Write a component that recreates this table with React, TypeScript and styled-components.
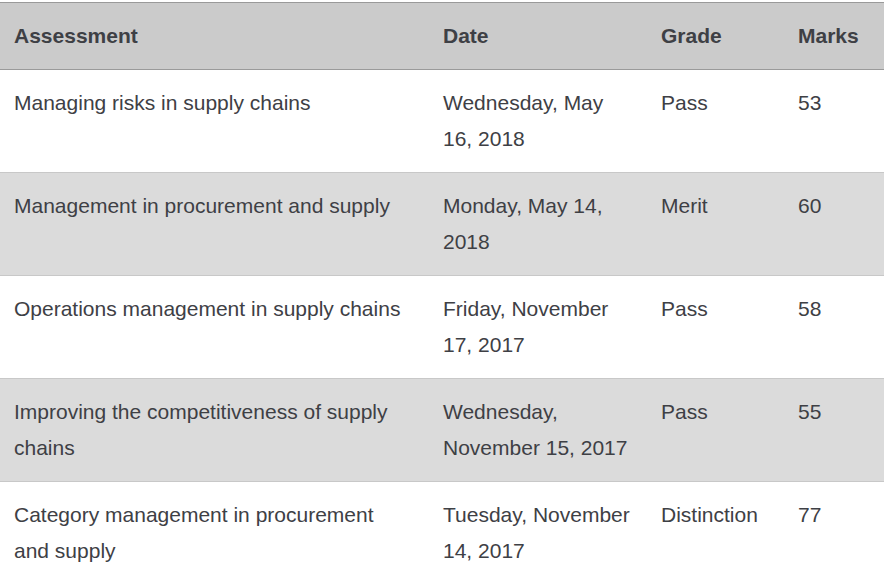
import styled, {createGlobalStyle} from 'styled-components';

const GlobalStyle = createGlobalStyle`
  html, body {
    margin: 0;
    padding: 0;
    background: #fff;
  }
  body {
    font-family: "Liberation Sans", Arial, sans-serif;
    color: #3e4045;
    overflow: hidden;
  }
`;

interface IAssessment {
    title: string;
    date: string;
    grade: string;
    marks: number;
}

const rows: IAssessment[] = [
    {title: 'Managing risks in supply chains', date: 'Wednesday, May 16, 2018', grade: 'Pass', marks: 53},
    {title: 'Management in procurement and supply', date: 'Monday, May 14, 2018', grade: 'Merit', marks: 60},
    {title: 'Operations management in supply chains', date: 'Friday, November 17, 2017', grade: 'Pass', marks: 58},
    {title: 'Improving the competitiveness of supply chains', date: 'Wednesday, November 15, 2017', grade: 'Pass', marks: 55},
    {title: 'Category management in procurement and supply', date: 'Tuesday, November 14, 2017', grade: 'Distinction', marks: 77},
];

const App = () => {
    return <Page>
        <GlobalStyle/>
        <Table>
            <colgroup>
                <col style={{width: 429}}/>
                <col style={{width: 218}}/>
                <col style={{width: 137}}/>
                <col style={{width: 100}}/>
            </colgroup>
            <thead>
                <tr>
                    <HeadCell>Assessment</HeadCell>
                    <HeadCell>Date</HeadCell>
                    <HeadCell>Grade</HeadCell>
                    <HeadCell>Marks</HeadCell>
                </tr>
            </thead>
            <tbody>
                {rows.map((row, index) => (
                    <Row key={row.title} $striped={index % 2 === 1}>
                        <Cell>{row.title}</Cell>
                        <Cell>{row.date}</Cell>
                        <Cell>{row.grade}</Cell>
                        <Cell>{row.marks}</Cell>
                    </Row>
                ))}
            </tbody>
        </Table>
    </Page>;
};

export default App;


const Page = styled.div`
  width: 884px;
  height: 578px;
  padding-top: 2px;
  box-sizing: border-box;
`;

const Table = styled.table`
  width: 884px;
  table-layout: fixed;
  border-collapse: collapse;
  font-size: 21px;
  line-height: 36px;
`;

const HeadCell = styled.th`
  text-align: left;
  font-weight: bold;
  background: #cbcbcb;
  color: #3e4045;
  padding: 15px 14px;
  border-top: 1px solid #9a9a9a;
  border-bottom: 1px solid #9a9a9a;
  vertical-align: top;
`;

const Row = styled.tr<{$striped: boolean}>`
  background: ${p => p.$striped ? '#dbdbdb' : '#fff'};
  border-bottom: 1px solid #c8c8c8;
`;

const Cell = styled.td`
  padding: 15px 14px;
  vertical-align: top;

  &:first-child {
    padding-right: 22px;
  }
`;
